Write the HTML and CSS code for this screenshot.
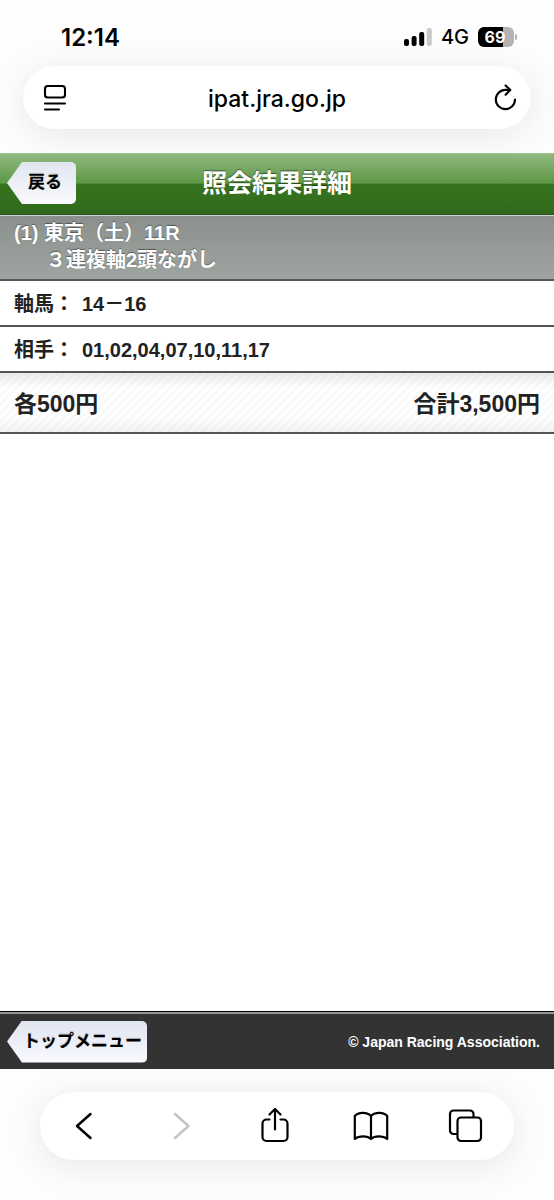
FILE: index.html
```html
<!DOCTYPE html>
<html lang="ja">
<head>
  <meta charset="UTF-8">
  <title>照会結果詳細</title>
  <meta name="viewport" content="width=device-width, initial-scale=1.0">
  <link rel="stylesheet" href="styles.css">
</head>
<body>

  <!-- Browser top -->
  <div class="browser-top">
    <div class="status-bar">
      <span class="time">12:14</span>
      <div class="status-icons">
        <svg class="signal" width="28" height="18" viewBox="0 0 28 18">
          <rect x="0" y="11" width="5" height="7" rx="2"/>
          <rect x="7.6" y="8" width="5" height="10" rx="2"/>
          <rect x="15.2" y="4" width="5" height="14" rx="2"/>
          <rect x="22.8" y="0" width="5" height="18" rx="2" fill="#c9c9c9"/>
        </svg>
        <span class="network">4G</span>
        <div class="battery"><span class="battery-level">69</span></div>
      </div>
    </div>

    <form class="address-bar">
      <button type="button" class="icon-btn" aria-label="ページメニュー">
        <svg width="24" height="28" viewBox="0 0 24 28" fill="none" stroke="#000" stroke-width="2.1" stroke-linecap="round">
          <rect x="2" y="2" width="20" height="11.5" rx="2.8"/>
          <path d="M2 19.5h20M2 25.5h14"/>
        </svg>
      </button>
      <input type="text" class="address" value="ipat.jra.go.jp" aria-label="アドレス">
      <button type="button" class="icon-btn" aria-label="再読み込み">
        <svg width="24" height="28" viewBox="0 0 24 28" fill="none" stroke="#000" stroke-width="2.1" stroke-linecap="round" stroke-linejoin="round">
          <path d="M22 15.500a9.600 9.600 0 1 1-9.600-9.600h4.500"/>
          <path d="M12.600 1.500l4.700 4.400-4.700 4.800"/>
        </svg>
      </button>
    </form>
  </div>

  <header class="header">
    <a href="#" class="arrow-btn back-btn">戻る</a>
    <h1>照会結果詳細</h1>
  </header>

  <main>
    <h2 class="race">
      <span>(1) 東京（土）11R</span>
      <span class="bet-type">３連複軸2頭ながし</span>
    </h2>
    <div class="row"><span>軸馬：</span><span>14－16</span></div>
    <div class="row"><span>相手：</span><span>01,02,04,07,10,11,17</span></div>
    <div class="total">
      <span>各500円</span>
      <span>合計3,500円</span>
    </div>
  </main>

  <footer class="footer">
    <a href="#" class="arrow-btn">トップメニュー</a>
    <small>© Japan Racing Association.</small>
  </footer>

  <!-- Browser bottom -->
  <div class="browser-bottom">
    <nav class="toolbar">
      <button type="button" class="icon-btn" aria-label="戻る">
        <svg width="36" height="36" viewBox="0 0 36 36" fill="none" stroke="#000" stroke-width="2.5" stroke-linecap="round" stroke-linejoin="round">
          <path d="M24.500 6L11 18l13.500 12"/>
        </svg>
      </button>
      <button type="button" class="icon-btn" aria-label="進む" disabled>
        <svg width="36" height="36" viewBox="0 0 36 36" fill="none" stroke="#c4c4c6" stroke-width="2.5" stroke-linecap="round" stroke-linejoin="round">
          <path d="M13 6l13.500 12L13 30"/>
        </svg>
      </button>
      <button type="button" class="icon-btn" aria-label="共有">
        <svg width="36" height="36" viewBox="0 0 36 36" fill="none" stroke="#000" stroke-width="2.2" stroke-linecap="round" stroke-linejoin="round">
          <path d="M12.500 11.500H9.500A4 4 0 0 0 5.500 15.500v13.500a4 4 0 0 0 4 4h17a4 4 0 0 0 4-4v-13.500a4 4 0 0 0-4-4h-3"/>
          <path d="M18 21.500V1M12.500 6.500L18 1l5.500 5.500"/>
        </svg>
      </button>
      <button type="button" class="icon-btn" aria-label="ブックマーク">
        <svg width="36" height="36" viewBox="0 0 36 36" fill="none" stroke="#000" stroke-width="2.2" stroke-linecap="round" stroke-linejoin="round">
          <path d="M18 8C14.500 4 5.500 3.500 1.800 8v23C6 27.500 14.500 27.500 18 31c3.500-3.500 12-3.500 16.200 0V8C30.500 3.500 21.500 4 18 8zM18 8v23"/>
        </svg>
      </button>
      <button type="button" class="icon-btn" aria-label="タブ">
        <svg width="36" height="36" viewBox="0 0 36 36" fill="none" stroke="#000" stroke-width="2.2" stroke-linejoin="round">
          <path d="M9.500 26H5.500A3.500 3.500 0 0 1 2 22.500V6A3.500 3.500 0 0 1 5.500 2.500h16.500A3.500 3.500 0 0 1 25.500 6v3.500"/>
          <rect x="9.500" y="9.500" width="23.500" height="23.500" rx="3.500"/>
        </svg>
      </button>
    </nav>
  </div>

</body>
</html>
```

FILE: styles.css
```css
* {
  box-sizing: border-box;
}

body {
  margin: 0;
  min-height: 100vh;
  display: flex;
  flex-direction: column;
  background: #fff;
  color: #222;
  font-family: "Liberation Sans", "Noto Sans CJK JP", sans-serif;
  font-weight: bold;
}

.icon-btn {
  display: flex;
  padding: 0;
  border: none;
  background: none;
}

/* browser top */
.browser-top {
  padding: 20px 23px 24px;
  background: #fdfdfd;
  color: #000;
  font-family: Inter, sans-serif;
  overflow: hidden;
}

.status-bar {
  display: flex;
  justify-content: space-between;
  align-items: center;
  height: 34px;
  padding: 0 14px 0 38px;
}

.time {
  font-size: 24px;
  font-weight: 600;
}

.status-icons {
  display: flex;
  align-items: center;
  gap: 9px;
}

.network {
  font-size: 20px;
  font-weight: 500;
}

.battery {
  position: relative;
  width: 36px;
  height: 20px;
  margin-right: 3px;
  padding-right: 2px;
  border-radius: 6px;
  background: linear-gradient(90deg, #000 70%, #b3b3b3 70%);
  color: #fff;
  font-size: 16px;
  font-weight: 700;
  line-height: 20px;
  text-align: center;
}

.battery::after {
  content: "";
  position: absolute;
  top: 7px;
  right: -3px;
  width: 2px;
  height: 6px;
  border-radius: 0 2px 2px 0;
  background: #b3b3b3;
}

.address-bar {
  display: flex;
  justify-content: space-between;
  align-items: center;
  height: 63px;
  margin-top: 12px;
  padding: 0 14px 0 20px;
  border-radius: 32px;
  background: #fff;
  box-shadow: 0 6px 36px rgba(0, 0, 0, 0.09);
}

.address {
  flex: 1;
  min-width: 0;
  padding: 2px 6px 0 0;
  border: none;
  background: none;
  color: #000;
  font-family: inherit;
  font-size: 23px;
  font-weight: 500;
  text-align: center;
}

/* page header */
.header {
  display: grid;
  grid-template-columns: 1fr auto 1fr;
  align-items: center;
  height: 63px;
  padding: 0 7px 3px;
  border-top: 1px solid #9cc48c;
  border-bottom: 1px solid #c9d6d4;
  background: linear-gradient(#91b881, #5c9845 48%, #37741f 49%, #2f6a1b);
  box-shadow: inset 0 -1px #2b4a24;
}

.header h1 {
  margin: 0;
  color: #fff;
  font-size: 25px;
  line-height: 36px;
  text-shadow: 0 -1px 1px rgba(0, 0, 0, 0.5);
}

.arrow-btn {
  height: 42px;
  padding: 0 5px 0 16px;
  border-radius: 0 5px 5px 0;
  background: linear-gradient(#dfe5ef, #fafaff);
  clip-path: polygon(15px 0, 100% 0, 100% 100%, 15px 100%, 0 50%);
  color: #000;
  font-size: 17px;
  line-height: 42px;
  text-decoration: none;
  text-shadow: 0 -1px 1px rgba(0, 0, 0, 0.3);
}

.back-btn {
  justify-self: start;
  padding: 0 14px 0 21px;
}

main {
  flex: 1;
}

.race {
  display: flex;
  flex-direction: column;
  margin: 0;
  padding: 4px 14px 5px;
  border-bottom: 2px solid #555;
  background: linear-gradient(#8b908c, #9ea5a0);
  color: #fff;
  font-size: 20px;
  line-height: 27px;
  text-shadow: 0 -1px 1px rgba(0, 0, 0, 0.4);
}

.bet-type {
  padding-left: 32px;
}

.row {
  display: flex;
  gap: 8px;
  padding: 8px 14px 6px;
  border-bottom: 2px solid #555;
  font-size: 20px;
  line-height: 30px;
}

.total {
  display: flex;
  justify-content: space-between;
  padding: 15px 14px 12px;
  border-bottom: 2px solid #555;
  background:
    linear-gradient(rgba(0, 0, 0, 0.08), transparent 25%, transparent 75%, rgba(0, 0, 0, 0.05)),
    repeating-linear-gradient(135deg, #fff 0 3px, #fafafa 3px 6px);
  font-size: 23px;
  line-height: 32px;
}

.footer {
  display: flex;
  justify-content: space-between;
  align-items: center;
  height: 58px;
  padding: 2px 14px 0 7px;
  border-top: 1px solid #000;
  background: #333;
  box-shadow: inset 0 2px #8e9691;
  color: #fff;
}

.footer small {
  font-size: 14px;
}

/* browser bottom */
.browser-bottom {
  padding: 23px 40px 40px;
  background: #fdfdfd;
  overflow: hidden;
}

.toolbar {
  display: flex;
  justify-content: space-between;
  align-items: center;
  height: 68px;
  padding: 0 30px 0 26px;
  border-radius: 34px;
  background: #fff;
  box-shadow: 0 6px 36px rgba(0, 0, 0, 0.09);
}
```
